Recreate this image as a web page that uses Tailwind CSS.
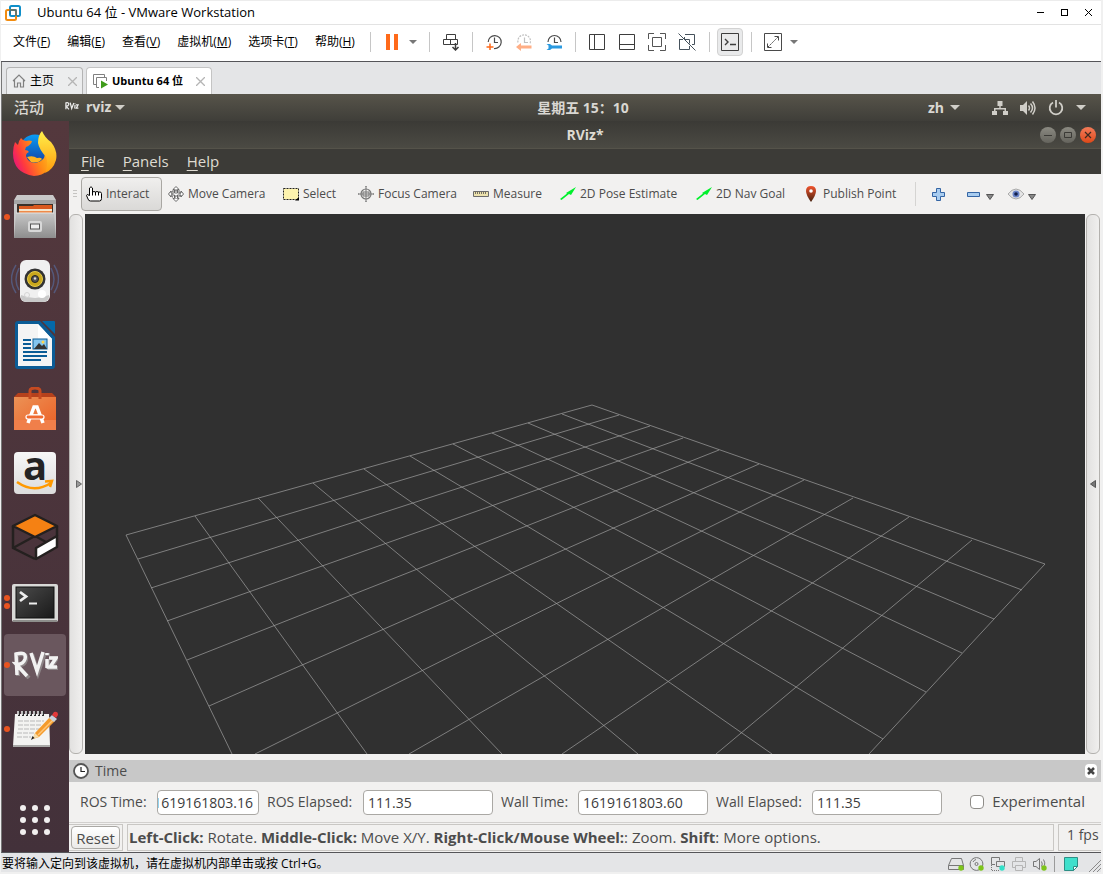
<!DOCTYPE html>
<html lang="zh-CN">
<head>
  <meta charset="UTF-8" />
  <title>Ubuntu 64 位 - VMware Workstation</title>
  <meta name="viewport" content="width=device-width, initial-scale=1.0" />
  <script src="https://cdn.jsdelivr.net/npm/@tailwindcss/browser@4"></script>
</head>

<body class="h-screen flex flex-col overflow-hidden bg-[#f0f0f0] pl-px pr-[2px] pb-[2px] text-xs text-black font-['Open_Sans','Noto_Sans_CJK_SC',sans-serif]">

  <!-- ─────────── Host window title ─────────── -->
  <header class="h-[25px] shrink-0 flex items-center bg-white border-t border-b border-t-[#ececec] border-b-[#e3e3e3] pl-1 pr-px">
    <svg class="w-4 h-4" viewBox="0 0 16 16" fill="none" stroke-width="2">
      <rect x="5" y="1" width="10" height="10" rx="1.5" stroke="#0f8fc9" />
      <rect x="1" y="5" width="10" height="10" rx="1.5" stroke="#f28c0f" />
      <path d="M5 9V5h6v6" stroke="#31708f" stroke-width="1.4" />
    </svg>
    <h1 class="ml-4 flex-1 text-[13px]">Ubuntu 64 位 - VMware Workstation</h1>
    <div class="flex">
      <button aria-label="Minimize" class="w-6 h-5 flex items-center justify-center"><svg class="w-[9px] h-[9px]" viewBox="0 0 9 9" stroke="#000"><path d="M1 4.5h7" /></svg></button>
      <button aria-label="Maximize" class="w-6 h-5 flex items-center justify-center"><svg class="w-[9px] h-[9px]" viewBox="0 0 9 9" stroke="#000" fill="none"><rect x="1.5" y="1.5" width="6" height="6" /></svg></button>
      <button aria-label="Close" class="w-6 h-5 flex items-center justify-center"><svg class="w-[9px] h-[9px]" viewBox="0 0 9 9" stroke="#000"><path d="M1 1l7 7M8 1l-7 7" /></svg></button>
    </div>
  </header>

  <!-- ─────────── Host menu + toolbar ─────────── -->
  <div class="h-[37px] shrink-0 pb-[2px] flex items-center bg-white border-b border-[#555559]">
    <nav class="w-[369px] pl-3 flex gap-[17px] whitespace-nowrap">
      <button>文件(<u>F</u>)</button>
      <button>编辑(<u>E</u>)</button>
      <button>查看(<u>V</u>)</button>
      <button>虚拟机(<u>M</u>)</button>
      <button>选项卡(<u>T</u>)</button>
      <button>帮助(<u>H</u>)</button>
    </nav>
    <div class="h-5 w-[59px] flex items-center border-l border-[#c6c6c6]">
      <button aria-label="Suspend" class="w-[42px] flex justify-center"><svg class="w-3 h-4" viewBox="0 0 12 16" fill="#ff6a1a"><path d="M0 0h4v16H0zM8 0h4v16H8z" /></svg></button>
      <button aria-label="Power options" class="-ml-1"><svg class="w-2 h-1" viewBox="0 0 8 4" fill="#777"><path d="M0 0h8L4 4z" /></svg></button>
    </div>
    <div class="h-5 w-[43px] flex items-center justify-center border-l border-[#c6c6c6]">
      <button aria-label="Send Ctrl+Alt+Del">
        <svg class="w-[18px] h-[18px]" viewBox="0 0 18 18" fill="none" stroke="#3d3d3d"><path d="M4.500 1.500h9v5h-9zM1.500 6.500h7v5h-7zM8.500 6.500h7v5h-7z" /><path d="M13.500 10v7M10.500 14l3 3 3-3" stroke-width="1.500" /></svg>
      </button>
    </div>
    <div class="h-5 w-[103px] px-[6px] flex items-center border-l border-[#c6c6c6]">
      <button aria-label="Take snapshot" class="w-[30px] flex justify-center">
        <svg class="w-[18px] h-[18px]" viewBox="0 0 18 18" fill="none" stroke="#4a4a4a" stroke-width="1.200"><path d="M3.200 9A6.500 6.500 0 1 1 9 15.500M9.500 4.500v5H13" /><path d="M5 10.500v6.500M1.500 14h7" stroke="#ff6a1a" stroke-width="1.500" /></svg>
      </button>
      <button aria-label="Revert snapshot" class="w-[30px] flex justify-center">
        <svg class="w-[18px] h-[18px]" viewBox="0 0 18 18" fill="none" stroke="#c0c0c0" stroke-width="1.200"><path d="M3 9.500a6.300 6.300 0 1 1 12 1" stroke-dasharray="2 1" /><path d="M9.500 4.500v5H13" /><path d="M1 14l5-4v2.500h10.500v3H6V18z" fill="#ffae85" stroke="none" /></svg>
      </button>
      <button aria-label="Manage snapshots" class="w-[30px] flex justify-center">
        <svg class="w-[18px] h-[18px]" viewBox="0 0 18 18" fill="none" stroke="#4a4a4a" stroke-width="1.200"><path d="M3 9a6.500 6.500 0 1 1 13 0M9.500 4.500v5H13" /><path d="M1.500 11H5l2 1.500h10v3H7L5 17H1.500l2-1.500v-3z" fill="#2b9ae0" stroke="none" /></svg>
      </button>
    </div>
    <div class="h-5 w-[134px] px-[6px] flex items-center border-l border-[#c6c6c6]">
      <button aria-label="Show library" class="w-[30px] flex justify-center"><svg class="w-[18px] h-[18px]" viewBox="0 0 18 18" fill="none" stroke="#3d3d3d"><path d="M1.500 1.500h15v15h-15zM6.500 1.500v15" /></svg></button>
      <button aria-label="Show thumbnails" class="w-[30px] flex justify-center"><svg class="w-[18px] h-[18px]" viewBox="0 0 18 18" fill="none" stroke="#3d3d3d"><path d="M1.500 1.500h15v15h-15zM1.500 11.500h15" /></svg></button>
      <button aria-label="Full screen" class="w-[30px] flex justify-center"><svg class="w-[18px] h-[18px]" viewBox="0 0 18 18" fill="none" stroke="#555"><path d="M.5 6V.5H6M12 .5h5.500V6M17.500 12v5.500H12M6 17.500H.5V12M4.500 4.500h9v9h-9z" /></svg></button>
      <button aria-label="Unity" class="w-[30px] flex justify-center"><svg class="w-[18px] h-[18px]" viewBox="0 0 18 18" fill="none" stroke="#46525c"><path d="M7 1.500h9.500v10H14M1.500 6.500H5M1.500 6v10.500h10V13M6.500 4v2.500h5v4M.5.5l17 17" /></svg></button>
    </div>
    <div class="h-5 w-[42px] pl-[7px] flex items-center border-l border-[#c6c6c6]">
      <button aria-label="Console view" class="w-[26px] h-7 shrink-0 flex items-center justify-center rounded border border-[#d2d2d2] bg-[#e9eaeb]"><svg class="w-[18px] h-[18px]" viewBox="0 0 18 18" fill="none" stroke="#3d3d3d"><path d="M.5.5h17v17H.5z" /><path d="M4 6l3 3-3 3M9 11.500h6" stroke-width="1.400" /></svg></button>
    </div>
    <div class="h-5 pl-[6px] flex items-center border-l border-[#c6c6c6]">
      <button aria-label="Stretch guest" class="w-[30px] flex justify-center"><svg class="w-[18px] h-[18px]" viewBox="0 0 18 18" fill="none" stroke="#4a4a4a"><path d="M.5.5h17v17H.5zM10.500 3.500h4v4M3.500 10.500v4h4" /><path d="M4 14L14 4" stroke-dasharray="2 1" /></svg></button>
      <button aria-label="Stretch options" class="w-3 flex justify-center"><svg class="w-2 h-1" viewBox="0 0 8 4" fill="#777"><path d="M0 0h8L4 4z" /></svg></button>
    </div>
  </div>

  <!-- ─────────── VM tabs ─────────── -->
  <div class="h-8 shrink-0 pl-1 flex items-end gap-[3px] bg-[#e4e5e7] border-l border-[#777]">
    <div class="h-[27px] w-[77px] px-[5px] flex items-center rounded-t border border-b-0 border-[#b4b4b4] bg-[#ecedee]">
      <svg class="w-[14px] h-[14px]" viewBox="0 0 14 14" fill="none" stroke="#808080" stroke-width="1.200"><path d="M1 7l6-6 6 6M2.500 6v7h3V9h3v4h3V6" /></svg>
      <a href="#home" class="ml-1 flex-1">主页</a>
      <button aria-label="Close home"><svg class="w-[9px] h-[9px]" viewBox="0 0 9 9" stroke="#b5b5b5" stroke-width="1.300"><path d="M0 0l9 9M9 0L0 9" /></svg></button>
    </div>
    <div class="h-[27px] w-[126px] px-[6px] flex items-center rounded-t border border-b-0 border-[#c4c4c4] bg-white">
      <svg class="w-[15px] h-[15px]" viewBox="0 0 15 15" fill="none" stroke="#808080"><path d="M3 10.500H.5V.5h11V3M6 13.500H3.500v-10h10V7" /><path d="M8 6.500l7 4-7 4z" fill="#3f9c1b" stroke="none" /></svg>
      <a href="#vm" class="ml-1 flex-1 text-[11px] font-bold whitespace-nowrap">Ubuntu 64 位</a>
      <button aria-label="Close VM tab"><svg class="w-[9px] h-[9px]" viewBox="0 0 9 9" stroke="#b5b5b5" stroke-width="1.300"><path d="M0 0l9 9M9 0L0 9" /></svg></button>
    </div>
  </div>

  <!-- ─────────── Guest desktop ─────────── -->
  <main class="flex-1 min-h-0 flex flex-col border-l border-l-[#777] border-b border-b-[#555559]">

    <!-- GNOME top bar -->
    <div class="h-[27px] shrink-0 pl-3 pr-[15px] flex items-center text-sm font-bold text-[#d9d7d2] bg-linear-to-b from-[#57544a] to-[#3f3e39]">
      <div class="flex-1 flex items-center">
        <button class="text-[15px] font-medium">活动</button>
        <svg class="ml-[21px] w-[14px] h-[10px] mb-[2px]" viewBox="0 0 46 30" fill="none" stroke="#eee" stroke-width="4"><path d="M3 26L3 5q11-3 9 6-2 5-8 5l9 10M17 4l5 19 7-18M33 11l-1 12M33 5v2M36 11h7l-6 11h7" /></svg>
        <button class="ml-[7px] flex items-center gap-1">rviz <svg class="w-[10px] h-[5px]" viewBox="0 0 10 5" fill="#d0cec8"><path d="M0 0h10L5 5z" /></svg></button>
      </div>
      <button class="ml-[66px]">星期五 15：10</button>
      <div class="flex-1 flex items-center justify-end">
        <button class="mr-8 flex items-center gap-[6px]">zh <svg class="w-[10px] h-[5px]" viewBox="0 0 10 5" fill="#d0cec8"><path d="M0 0h10L5 5z" /></svg></button>
        <button aria-label="System menu" class="flex items-center gap-3">
          <svg class="w-4 h-4" viewBox="0 0 16 16" fill="#d0cec8"><path d="M5.500 1h5v5H8.700v2H14v3h2v4h-5v-4h1.500V9.500h-9V11H5v4H0v-4h2V8h5.300V6H5.500z" /></svg>
          <svg class="w-4 h-4" viewBox="0 0 16 16" fill="none" stroke="#d0cec8" stroke-width="1.500"><path d="M0 5h3l4-4v14l-4-4H0z" fill="#d0cec8" stroke="none" /><path d="M8.500 5.500q2 2.500 0 5M10.500 3.500q4 4.500 0 9M12.500 1.500q5 6.500 0 13" /></svg>
          <svg class="w-4 h-4" viewBox="0 0 16 16" fill="none" stroke="#d0cec8" stroke-width="1.800"><path d="M5 2.500a6.300 6.300 0 1 0 6 0M8 0v7.500" /></svg>
          <svg class="w-[10px] h-[5px]" viewBox="0 0 10 5" fill="#d0cec8"><path d="M0 0h10L5 5z" /></svg>
        </button>
      </div>
    </div>

    <div class="flex-1 min-h-0 flex">

      <!-- Dock -->
      <aside class="w-[67px] shrink-0 pr-px flex flex-col bg-linear-to-b from-[#54383d] to-[#43313a]">
        <button aria-label="Firefox" class="h-16 flex items-center justify-center">
          <svg class="w-11 h-[46px]" viewBox="0 0 44 46">
            <defs>
              <linearGradient id="fx" x1="1" y1=".3" x2="0" y2=".7"><stop offset="0" stop-color="#ffc61f" /><stop offset=".4" stop-color="#ff8a16" /><stop offset=".75" stop-color="#ff3b3d" /><stop offset="1" stop-color="#e5127d" /></linearGradient>
              <linearGradient id="fy" x1="0" y1="0" x2="0" y2="1"><stop offset="0" stop-color="#fff04a" /><stop offset="1" stop-color="#ff9a0d" /></linearGradient>
              <linearGradient id="fb" x1="0" y1="0" x2="0" y2="1"><stop offset="0" stop-color="#0a9cf5" /><stop offset="1" stop-color="#123a9c" /></linearGradient>
            </defs>
            <circle cx="22" cy="20" r="15.500" fill="url(#fb)" />
            <path d="M2 12l3 3q1-5 3-7 2 3 5 3 3-1 6 0-1 4-6 6l-1 3q3 0 4 2-3 1-3 4 2 7 9 7 6-1 9-5 2-5 0-12 8 5 8 11-1 18-18 19Q0 43 0 23 0 17 2 12z" fill="url(#fx)" />
            <path d="M29 1q3 7 9 11 7 9 5 18-3 10-11 13 4-9 1-16-7-8-8-14 0-8 4-12z" fill="url(#fy)" />
            <path d="M14 27q6-2 10 1 4-1 5 1-4 5-11 3z" fill="#ffb320" />
          </svg>
        </button>
        <button aria-label="Files" class="relative h-16 flex items-center justify-center">
          <span class="absolute left-[2px] top-[29px] w-[6px] h-[6px] rounded-full bg-[#e95420]"></span>
          <svg class="w-[42px] h-11" viewBox="0 0 42 44">
            <defs><linearGradient id="fi" x1="0" y1="0" x2="0" y2="1"><stop offset="0" stop-color="#c6c6c6" /><stop offset="1" stop-color="#8e8e8e" /></linearGradient></defs>
            <path d="M3 0h36l3 5v38H0V5z" fill="#c9c9c9" /><path d="M0 5h42v4H0z" fill="#a5a5a5" />
            <path d="M3 9h36v10H3z" fill="#3a3029" /><path d="M5 11h14l1-1h18v8H5z" fill="#d9591f" /><path d="M5 14h33v2H5z" fill="#f5e5cc" /><path d="M5 16h33v3H5z" fill="#ef8a49" />
            <path d="M2 18h38l2 25H0z" fill="url(#fi)" /><path d="M2 18h38" stroke="#e2e2e2" />
            <rect x="14" y="26" width="14" height="11" rx="2" fill="#d8d8d8" /><rect x="16.500" y="29" width="9" height="5" fill="#eee" stroke="#555" />
          </svg>
        </button>
        <button aria-label="Rhythmbox" class="h-16 flex items-center justify-center">
          <svg class="w-12 h-11" viewBox="0 0 48 44" fill="none">
            <path d="M5 6q-9 14 0 28M8 9q-6 12 0 22M43 6q9 14 0 28M40 9q6 12 0 22" stroke="#54587a" stroke-width="1.500" />
            <rect x="9" y="1" width="30" height="42" rx="6" fill="#f0f0f0" /><path d="M10 36q14 6 28 0v2q-1 5-6 5H16q-6 0-6-5z" fill="#c9c9c9" />
            <circle cx="24" cy="20" r="10.500" fill="#333" /><circle cx="24" cy="20" r="7.500" fill="#c9a71c" stroke="#e5cb4a" /><circle cx="24" cy="20" r="3.500" fill="#555" stroke="#222" /><circle cx="24" cy="19.500" r="1.200" fill="#ddd" />
            <circle cx="31" cy="35" r="4" fill="#fff" /><circle cx="16" cy="36" r="2.500" stroke="#d5d5d5" />
          </svg>
        </button>
        <button aria-label="LibreOffice Writer" class="h-16 flex items-center justify-center">
          <svg class="w-10 h-12" viewBox="0 0 40 48">
            <path d="M3 0h22l15 16v29q0 3-3 3H3q-3 0-3-3V3q0-3 3-3z" fill="#0b5c96" /><path d="M27 0h12q1 0 1 1v12z" fill="#0569a8" />
            <path d="M3 3h20l14 15v27H3z" fill="#f4f4f4" /><path d="M23 3v15h14z" fill="#fff" />
            <path d="M8 19h8M8 23h8M8 27h8M8 31h24M8 35h24M8 39h18" stroke="#0b5c96" stroke-width="2" /><rect x="18" y="18" width="14" height="10" fill="#83c5ef" stroke="#0b5c96" /><path d="M19 28l5-6 3 3 2-2 3 5z" fill="#333" /><circle cx="28" cy="21" r="1.500" fill="#ffd54a" />
          </svg>
        </button>
        <button aria-label="Ubuntu Software" class="h-16 flex items-center justify-center">
          <svg class="w-[42px] h-11" viewBox="0 0 42 44">
            <defs><linearGradient id="sw" x1="0" y1="0" x2="1" y2="1"><stop offset="0" stop-color="#eb9256" /><stop offset="1" stop-color="#ed5f24" /></linearGradient></defs>
            <path d="M4 6h34l4 4v5H0v-5z" fill="#b5411c" /><path d="M0 10h42v33H0z" fill="url(#sw)" /><path d="M0 33h42v10H0z" fill="#f07f4a" />
            <path d="M16 12V4q0-3 5-3t5 3v8" fill="none" stroke="#c54a21" stroke-width="3" />
            <path d="M14 36l6-16h3l6 16M17 29h9" fill="none" stroke="#fff" stroke-width="3.500" /><rect x="12" y="28" width="18" height="4" rx="2" fill="#f06a30" stroke="#fff" stroke-width="1.200" />
          </svg>
        </button>
        <button aria-label="Amazon" class="h-16 flex items-center justify-center">
          <span class="relative w-[42px] h-[42px] rounded-sm bg-linear-to-b from-[#f7f7f7] to-[#dcdcdc]">
            <span class="absolute inset-x-0 top-[-5px] text-center text-[40px] leading-9 font-bold text-[#242424]">a</span>
            <svg class="absolute left-0 bottom-0 w-[42px] h-4" viewBox="0 0 42 16" fill="none" stroke="#ff9900" stroke-width="2.500"><path d="M3 4q17 12 34 1M31 3.500l7-.5-2 6" /></svg>
          </span>
        </button>
        <button aria-label="Gazebo" class="h-16 flex items-center justify-center">
          <svg class="w-12 h-12" viewBox="0 0 48 48" stroke="#24201f" stroke-width="2.500" stroke-linejoin="round" fill="none">
            <path d="M2 13v22l22 11M46 13v10M24 23L2 35M24 23l11 6" /><path d="M24 2l22 11-22 11L2 13z" fill="#f58113" /><path d="M25 35l21-12v11L25 46z" fill="#fff" />
          </svg>
        </button>
        <button aria-label="Terminal" class="relative h-16 pt-1 flex items-center justify-center">
          <span class="absolute left-[2px] top-[26px] w-[6px] h-[6px] rounded-full bg-[#e95420]"></span>
          <span class="absolute left-[2px] top-[34px] w-[6px] h-[6px] rounded-full bg-[#e95420]"></span>
          <svg class="w-[46px] h-10" viewBox="0 0 46 40">
            <defs><linearGradient id="tm" x1="0" y1="0" x2="1" y2="1"><stop offset="0" stop-color="#4b4b4b" /><stop offset="1" stop-color="#191919" /></linearGradient></defs>
            <rect y="1" width="46" height="38" rx="2" fill="#d9d9d7" /><path d="M1 38h44" stroke="#8e8e8c" stroke-width="2" /><rect x="4" y="4" width="38" height="31" fill="url(#tm)" stroke="#111" />
            <path d="M8 9l6 4.500L8 18" fill="none" stroke="#eee" stroke-width="2.800" /><path d="M17 20.500h8" stroke="#eee" stroke-width="2" />
          </svg>
        </button>
        <button aria-label="RViz" class="relative h-16 flex items-center justify-center">
          <span class="w-[62px] h-[62px] rounded bg-[#6a575e]"></span>
          <span class="absolute left-[2px] top-[29px] w-[6px] h-[6px] rounded-full bg-[#e95420]"></span>
          <svg class="absolute left-[10px] top-[16px] w-[46px] h-[30px]" viewBox="0 0 46 30" fill="none">
            <path d="M6 27L5 6q11-3 9 5-2 6-9 5l12 13M20 5l6 19 7-20M36 11v9M36 4v3M38 9h7l-6 10h7" stroke="#8c8486" stroke-width="4" />
            <path d="M5 26L4 5q11-3 9 5-2 6-9 5l11 12M19 4l6 18 6-19M35 10v9M35 4v2M37 9h7l-6 9h7" stroke="#f2f2f2" stroke-width="3.500" />
          </svg>
        </button>
        <button aria-label="Text Editor" class="relative h-16 flex items-center justify-center">
          <span class="absolute left-[2px] top-[29px] w-[6px] h-[6px] rounded-full bg-[#e95420]"></span>
          <svg class="w-[46px] h-[38px]" viewBox="0 0 46 38">
            <path d="M3 4h34l1 32H1z" fill="#f3f3f1" /><path d="M1 36h37" stroke="#a9a9a7" stroke-width="2" />
            <path d="M7 1v5M11 1v5M15 1v5M19 1v5M23 1v5M27 1v5M31 1v5" stroke="#2d2d2d" stroke-width="2" /><path d="M6 1v4M10 1v4M14 1v4M18 1v4M22 1v4M26 1v4M30 1v4" stroke="#eee" stroke-width="1.500" />
            <path d="M6 11h26M6 15h24M6 19h22M5 23h17M5 27h14" stroke="#b9b9b9" stroke-dasharray="5 1" />
            <path d="M23 23L38 7l5 4-16 16-6 2z" fill="#f49b2c" /><path d="M26 25L41 10" stroke="#ffc77a" stroke-width="1.500" /><path d="M37 8l3-3 5 4-3 3z" fill="#c8d2dc" /><path d="M40 5l2-3q4-1 4 3l-2 3z" fill="#e23a3a" /><path d="M20 29l3-6 4 4z" fill="#f6dca7" /><path d="M19 30l1.500-4 2 2z" fill="#222" />
          </svg>
        </button>
        <button aria-label="Show applications" class="mt-auto h-16 flex items-center justify-center">
          <svg class="w-[30px] h-[30px]" viewBox="0 0 30 30" fill="#f1efef"><circle cx="3" cy="3" r="3" /><circle cx="15" cy="3" r="3" /><circle cx="27" cy="3" r="3" /><circle cx="3" cy="15" r="3" /><circle cx="15" cy="15" r="3" /><circle cx="27" cy="15" r="3" /><circle cx="3" cy="27" r="3" /><circle cx="15" cy="27" r="3" /><circle cx="27" cy="27" r="3" /></svg>
        </button>
      </aside>

      <!-- RViz window -->
      <section class="flex-1 min-w-0 flex flex-col bg-[#f2f1f0] text-sm text-[#4c4c4c]">
        <div class="h-7 shrink-0 px-[5px] grid grid-cols-[1fr_auto_1fr] items-center border-b border-[#55534a] bg-linear-to-b from-[#3b3a36] to-[#4b4a43]">
          <h2 class="col-start-2 text-sm font-bold text-[#dfdbd2]">RViz*</h2>
          <div class="flex justify-end gap-1">
            <button aria-label="Minimize RViz" class="w-4 h-4 rounded-full bg-linear-to-b from-[#8b8a82] to-[#65645d] flex items-center justify-center"><svg class="w-2 h-2" viewBox="0 0 8 8" stroke="#3b3a36"><path d="M0 4.500h8" /></svg></button>
            <button aria-label="Maximize RViz" class="w-4 h-4 rounded-full bg-linear-to-b from-[#8b8a82] to-[#65645d] flex items-center justify-center"><svg class="w-2 h-2" viewBox="0 0 8 8" stroke="#3b3a36" fill="none"><path d="M.5 1.500h7v5h-7z" /></svg></button>
            <button aria-label="Close RViz" class="w-4 h-4 rounded-full bg-linear-to-b from-[#f37b58] to-[#dd4814] flex items-center justify-center"><svg class="w-2 h-2" viewBox="0 0 8 8" stroke="#3b2a20" stroke-width="1.200"><path d="M1 1l6 6M7 1L1 7" /></svg></button>
          </div>
        </div>

        <nav class="h-[25px] shrink-0 pl-3 flex items-center gap-[18px] bg-[#3c3b37] text-[15px] text-[#dfdbd2] underline-offset-3">
          <button><u>F</u>ile</button>
          <button><u>P</u>anels</button>
          <button><u>H</u>elp</button>
        </nav>

        <!-- Tool buttons -->
        <div class="h-10 shrink-0 grid grid-cols-[12px_82px_115px_75px_115px_87px_136px_107px_117px_1fr] items-center text-xs whitespace-nowrap">
          <svg class="ml-1 w-1 h-2" viewBox="0 0 4 8" stroke="#c5c4c2"><path d="M0 .5h4M0 3.500h4M0 6.500h4" /></svg>
          <button class="w-[81px] h-[34px] pl-1 flex items-center gap-1 rounded border border-[#a9a7a3] bg-linear-to-b from-[#f0efee] to-[#dad9d7]">
            <svg class="w-4 h-4" viewBox="0 0 16 16" fill="#fff" stroke="#000"><path d="M3.500 9.500V2Q5 -.5 6.500 2v4q1.500-1 3 0 1.500-1 3 0 3-.5 3 1.500v5q0 2.500-2 2.500h-9q-2 0-2.500-2L.5 9.500Q.5 7.500 3.500 9.500z" /><path d="M6.500 6v3.500M9.500 6v3.500M12.500 6v3.500" /></svg>
            Interact
          </button>
          <button class="pl-[5px] flex items-center gap-1">
            <svg class="w-4 h-4" viewBox="0 0 16 16" fill="#fff" stroke="#666"><path d="M8 .5l3 3H9.500V7H13V5l2.500 3L13 11V9H9.500v3.500H11l-3 3-3-3h1.500V9H3v2L.5 8 3 5v2h3.500V3.500H5z" /><path d="M4 5h8v6H4zM8 3v10" fill="none" stroke-dasharray="2 1" /></svg>
            Move Camera
          </button>
          <button class="pl-[5px] flex items-center gap-1">
            <svg class="w-4 h-[14px]" viewBox="0 0 16 14"><path d="M.5 1.500h15v11H.5z" fill="#fdf3ae" stroke="#222" stroke-dasharray="2 1" /><path d="M12 13.500h4V10z" fill="#000" /></svg>
            Select
          </button>
          <button class="pl-[5px] flex items-center gap-1">
            <svg class="w-4 h-4" viewBox="0 0 16 16" fill="none" stroke="#777"><path d="M8 0v16M0 8h16M7 0h2M7 16h2M0 7v2M16 7v2" /><circle cx="8" cy="8" r="5" stroke-width="1.200" /><path d="M5 6h6v4H5z" /></svg>
            Focus Camera
          </button>
          <button class="pl-[5px] flex items-center gap-1">
            <svg class="w-4 h-2" viewBox="0 0 16 8"><path d="M.5 1.500h15v5H.5z" fill="#ede2ad" stroke="#6b6b6b" /><path d="M2.500 2v2M4.500 2v2M6.500 2v2M8.500 2v2M10.500 2v2M12.500 2v2" stroke="#444" stroke-width=".7" /></svg>
            Measure
          </button>
          <button class="pl-[5px] flex items-center gap-1">
            <svg class="w-4 h-4" viewBox="0 0 16 16" fill="#00f02c"><path d="M16 1l-5 8-2-1-7.500 6L0 13l7-5.500L6 7z" /></svg>
            2D Pose Estimate
          </button>
          <button class="pl-[5px] flex items-center gap-1">
            <svg class="w-4 h-4" viewBox="0 0 16 16" fill="#00f02c"><path d="M16 1l-5 8-2-1-7.500 6L0 13l7-5.500L6 7z" /></svg>
            2D Nav Goal
          </button>
          <button class="pl-[5px] flex items-center gap-1">
            <svg class="w-4 h-4" viewBox="0 0 16 16"><defs><linearGradient id="pin" x1="0" y1="0" x2="0" y2="1"><stop offset="0" stop-color="#f2542d" /><stop offset="1" stop-color="#45220f" /></linearGradient></defs><path d="M8 0q5 0 5 5 0 4-5 11Q3 9 3 5q0-5 5-5z" fill="url(#pin)" /><circle cx="8" cy="5" r="1.800" fill="#fff" /></svg>
            Publish Point
          </button>
          <div class="h-6 pl-4 flex items-center border-l border-[#d5d4d2]">
            <button aria-label="Add tool"><svg class="w-[13px] h-[13px]" viewBox="0 0 13 13"><path d="M4.500.5h4v4h4v4h-4v4h-4v-4h-4v-4h4z" fill="#a9cdf0" stroke="#3465a4" /></svg></button>
            <button aria-label="Remove tool" class="ml-[22px] flex items-center gap-[6px]"><svg class="w-[13px] h-[5px]" viewBox="0 0 13 5"><path d="M.5.5h12v4H.5z" fill="#a9cdf0" stroke="#3465a4" /></svg><svg class="mt-[6px] w-2 h-[6px]" viewBox="0 0 8 6"><path d="M.5.5h7L4 5.500z" fill="#888" stroke="#555" /></svg></button>
            <button aria-label="Tool visibility" class="ml-[14px] flex items-center gap-1"><svg class="w-4 h-3" viewBox="0 0 16 12"><path d="M0 6q8-10 16 0-8 10-16 0z" fill="#e5e5e5" stroke="#aaa" /><circle cx="8" cy="6" r="3.500" fill="#6a84c8" /><circle cx="8" cy="6" r="1.800" fill="#14204a" /></svg><svg class="mt-[6px] w-2 h-[6px]" viewBox="0 0 8 6"><path d="M.5.5h7L4 5.500z" fill="#888" stroke="#555" /></svg></button>
          </div>
        </div>

        <!-- 3D view -->
        <div class="flex-1 min-h-0 flex">
          <button aria-label="Show left dock" class="w-[14px] mr-[2px] shrink-0 flex items-center justify-end rounded-md border border-[#b3b1ae] bg-linear-to-r from-[#e2e1e0] to-[#f0efee]">
            <svg class="w-[6px] h-2" viewBox="0 0 6 8"><path d="M.5.5l5 3.500-5 3.500z" fill="#999" stroke="#666" /></svg>
          </button>
          <svg class="flex-1 min-w-0 h-full bg-[#303030]" viewBox="0 0 1000 540" preserveAspectRatio="xMidYMid slice" fill="none" stroke="#a0a0a0" stroke-width=".7">
            <path d="M507 191L960 350M477 200L937 376M443 209L909 405M407 219L877 439M368 230L841 478M325 242L798 525M279 255L687 540M228 269L553 540M173 284L417 540M110 302L282 540M41 321L147 540" />
            <path d="M507 191L41 321M534 201L53 345M565 212L66 374M598 224L82 407M634 236L102 446M674 250L124 492M719 266L170 540M768 284L324 540M824 303L477 540M887 326L631 540M960 350L784 540" />
          </svg>
          <button aria-label="Show right dock" class="w-[14px] mx-px shrink-0 flex items-center justify-center rounded-md border border-[#b3b1ae] bg-linear-to-r from-[#e2e1e0] to-[#f0efee]">
            <svg class="w-[6px] h-2" viewBox="0 0 6 8"><path d="M5.500.5l-5 3.500 5 3.500z" fill="#777" stroke="#555" /></svg>
          </button>
        </div>

        <!-- Time panel -->
        <div class="h-[22px] mt-[6px] shrink-0 px-1 flex items-center bg-[#c8c8c8]">
          <svg class="w-4 h-4" viewBox="0 0 16 16" fill="#fff" stroke="#555" stroke-width="1.800"><circle cx="8" cy="8" r="7" /><path d="M8 4v4.500h4" fill="none" stroke="#222" stroke-width="1.200" /></svg>
          <h3 class="ml-[6px] flex-1">Time</h3>
          <button aria-label="Close Time panel" class="w-3 h-[14px] flex items-center justify-center rounded-sm bg-white"><svg class="w-2 h-2" viewBox="0 0 8 8" stroke="#444" stroke-width="2.500"><path d="M1 1l6 6M7 1L1 7" /></svg></button>
        </div>
        <form class="h-[41px] shrink-0 pl-[11px] grid grid-cols-[69px_102px_88px_130px_69px_130px_88px_130px_1fr] gap-x-2 items-center whitespace-nowrap border-b border-[#d2d0ce]">
          <label for="rosTime">ROS Time:</label>
          <input id="rosTime" dir="rtl" value="1619161803.16" class="h-[25px] w-full pr-[5px] rounded border border-[#aaa8a4] bg-white text-[#3c3c3c]" />
          <label for="rosElapsed">ROS Elapsed:</label>
          <input id="rosElapsed" value="111.35" class="h-[25px] w-full px-1 rounded border border-[#aaa8a4] bg-white text-[#3c3c3c]" />
          <label for="wallTime">Wall Time:</label>
          <input id="wallTime" value="1619161803.60" class="h-[25px] w-full px-1 rounded border border-[#aaa8a4] bg-white text-[#3c3c3c]" />
          <label for="wallElapsed">Wall Elapsed:</label>
          <input id="wallElapsed" value="111.35" class="h-[25px] w-full px-1 rounded border border-[#aaa8a4] bg-white text-[#3c3c3c]" />
          <label class="flex items-center justify-end gap-2 pr-4 text-[15px]">
            <input type="checkbox" class="appearance-none w-[14px] h-[14px] rounded-sm border border-[#8f8d89] bg-white" />
            Experimental
          </label>
        </form>

        <!-- Status row -->
        <div class="h-[29px] shrink-0 py-px flex gap-1 text-[15px] whitespace-nowrap">
          <div class="w-[54px] px-[2px] py-px border border-l-0 border-[#c9c7c4]">
            <button class="w-full h-full rounded border border-[#aaa8a4] bg-linear-to-b from-white to-[#ebeae9] leading-5">Reset</button>
          </div>
          <p class="flex-1 min-w-0 pl-px leading-[25px] border border-[#c9c7c4]"><b>Left-Click:</b> Rotate. <b>Middle-Click:</b> Move X/Y. <b>Right-Click/Mouse Wheel:</b>: Zoom. <b>Shift</b>: More options.</p>
          <p class="w-[43px] pl-2 text-sm leading-5 overflow-hidden border border-r-0 border-[#c9c7c4]">1 fps</p>
        </div>
      </section>
    </div>
  </main>

  <!-- ─────────── Host status bar ─────────── -->
  <footer class="h-[19px] shrink-0 pl-px pt-[3px] flex items-center bg-[#e4e5e7]">
    <p class="flex-1">要将输入定向到该虚拟机，请在虚拟机内部单击或按 Ctrl+G。</p>
    <div class="flex items-center">
      <button aria-label="Hard disk" class="w-[21px] flex justify-center"><svg class="w-4 h-[14px]" viewBox="0 0 16 14" fill="none" stroke="#777"><path d="M3.500 1.500h10l2 7v4H.5v-4zM.5 8.500h15" /><circle cx="13" cy="11" r="2.700" fill="#7dc41c" stroke="none" /></svg></button>
      <button aria-label="CD/DVD" class="w-[21px] flex justify-center"><svg class="w-4 h-[14px]" viewBox="0 0 16 14" fill="none" stroke="#777"><circle cx="7.500" cy="7" r="6.400" /><circle cx="7.500" cy="7" r="1.500" /><path d="M4 5q1-2 3-2.500" /><circle cx="12" cy="11" r="2.700" fill="#7dc41c" stroke="none" /></svg></button>
      <button aria-label="Network adapter" class="w-[21px] flex justify-center"><svg class="w-4 h-[14px]" viewBox="0 0 16 14" fill="none" stroke="#777"><path d="M5 7.500H1.500v-7h8v3M6.500 4.500h8v5h-8z" /><path d="M1.500 8v5.500H10" stroke-dasharray="1 1" /><circle cx="12" cy="11" r="2.700" fill="#33dfc8" stroke="none" /></svg></button>
      <button aria-label="Printer" class="w-[21px] flex justify-center"><svg class="w-4 h-[14px]" viewBox="0 0 16 14" fill="none" stroke="#b5b5b5"><path d="M4.500 4V.5h7V4M4 10.500H1.500v-6h13v6H12M4.500 8.500h7v5h-7z" /></svg></button>
      <button aria-label="Sound card" class="w-[21px] flex justify-center"><svg class="w-4 h-[14px]" viewBox="0 0 16 14" fill="none" stroke="#777"><path d="M1.500 4.500H4l3.500-3v11L4 9.500H1.500zM9.500 4.500q1.500 2.500 0 5M11.500 2.500q2 3.500 1 6" /><circle cx="12" cy="11" r="2.700" fill="#7dc41c" stroke="none" /></svg></button>
      <span class="ml-1 h-4 border-l border-[#9a9a9a]"></span>
      <button aria-label="Messages" class="ml-[9px]"><svg class="w-[14px] h-[14px]" viewBox="0 0 14 14"><path d="M.5.5h13v9l-4 4h-9z" fill="#3fe0cc" stroke="#2d8f86" /><path d="M13.500 9.500h-4v4z" fill="#fff" stroke="#2d8f86" /></svg></button>
      <svg class="ml-[11px] mt-1 w-3 h-3" viewBox="0 0 12 12" stroke="#8a8a8a"><path d="M0 12L12 0M4 12l8-8M8 12l4-4" /></svg>
    </div>
  </footer>
</body>
</html>
